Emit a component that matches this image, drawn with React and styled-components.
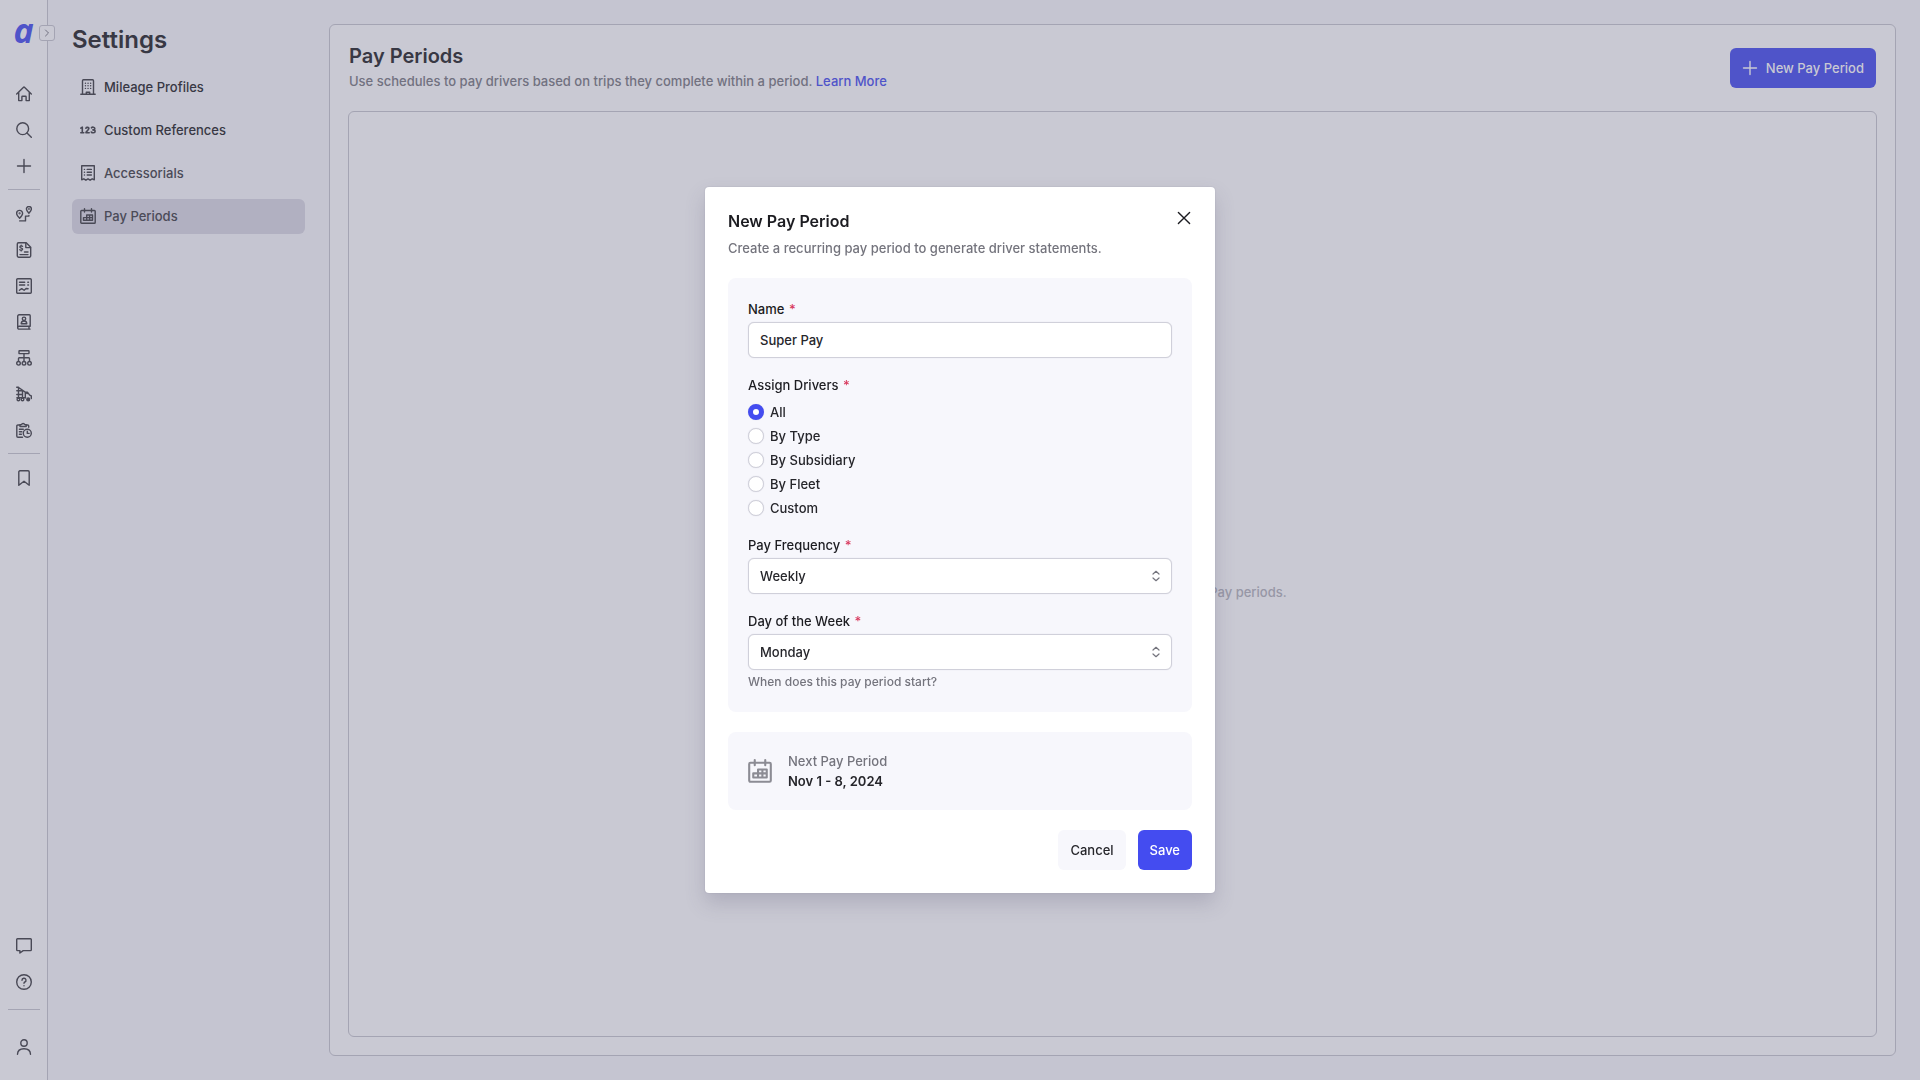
import React, { useState } from 'react';
import styled, { createGlobalStyle, css } from 'styled-components';

const colors = {
  rail: '#c9c9d3',
  page: '#c5c5d1',
  line: '#a4a4b3',
  active: '#b1b0c1',
  ink: '#383844',
  inkSoft: '#4b4b58',
  icon: '#494956',
  muted: '#717180',
  faint: '#9797a6',
  brandDim: '#4f54c9',
  brand: '#444cf0',
  white: '#ffffff',
  card: '#f7f7fc',
  text: '#26262b',
  label: '#1c1c21',
  gray: '#74747d',
  border: '#d0d0da',
  required: '#d83a5e',
};

const GlobalStyle = createGlobalStyle`
  * {
    box-sizing: border-box;
  }

  body {
    margin: 0;
    background: ${colors.page};
    font-family: Inter, 'Liberation Sans', sans-serif;
    font-size: 13px;
    line-height: 20px;
    font-weight: 500;
    color: ${colors.text};
  }

  button,
  input,
  select {
    font: inherit;
    color: inherit;
  }
`;

const Layout = styled.div`
  display: flex;
  min-height: 100vh;
`;

const Rail = styled.nav`
  position: relative;
  display: flex;
  flex-direction: column;
  align-items: center;
  width: 48px;
  padding: 12px 0 15px;
  background: ${colors.rail};
  border-right: 1px solid ${colors.line};
`;

const Logo = styled.a`
  height: 64px;
  font-family: 'Open Sans', sans-serif;
  font-size: 34px;
  font-style: italic;
  font-weight: 700;
  line-height: 36px;
  color: ${colors.brandDim};
  text-decoration: none;
`;

const Expand = styled.button`
  position: absolute;
  top: 25px;
  right: -8px;
  display: flex;
  align-items: center;
  justify-content: center;
  width: 16px;
  height: 16px;
  padding: 0;
  color: ${colors.muted};
  background: ${colors.rail};
  border: 1px solid ${colors.line};
  border-radius: 3px;
`;

const RailLink = styled.a`
  display: flex;
  align-items: center;
  justify-content: center;
  width: 36px;
  height: 36px;
  color: ${colors.icon};
`;

const Divider = styled.hr`
  width: 32px;
  height: 1px;
  margin: ${(props) => props.$space || '5px 0 6px'};
  background: ${colors.line};
  border: 0;
`;

const Spacer = styled.div`
  flex: 1;
`;

const Submenu = styled.aside`
  width: 281px;
  padding: 24px;
`;

const SettingsTitle = styled.h1`
  margin: 0 0 14px;
  font-size: 24px;
  font-weight: 600;
  line-height: 32px;
  color: ${colors.ink};
`;

const Menu = styled.ul`
  display: flex;
  flex-direction: column;
  gap: 8px;
  margin: 0;
  padding: 0;
  list-style: none;
`;

const MenuLink = styled.a`
  display: flex;
  align-items: center;
  gap: 8px;
  height: 35px;
  padding: 0 8px 1px;
  border-radius: 6px;
  color: ${(props) => (props.$soft ? colors.inkSoft : colors.ink)};
  text-decoration: none;

  svg {
    color: ${colors.icon};
  }

  ${(props) =>
    props.$active &&
    css`
      background: ${colors.active};
    `}
`;

const Main = styled.main`
  flex: 1;
  display: flex;
  flex-direction: column;
  margin: 24px 24px 24px 0;
  padding: 18px;
  background: ${colors.rail};
  border: 1px solid ${colors.line};
  border-radius: 6px;
`;

const Header = styled.header`
  display: flex;
  align-items: center;
  justify-content: space-between;
  padding: 0 1px;
  margin-bottom: 18px;
`;

const PageTitle = styled.h2`
  margin: 0;
  font-size: 20px;
  font-weight: 600;
  line-height: 26px;
  color: ${colors.ink};
`;

const PageText = styled.p`
  margin: 2px 0;
  color: ${colors.muted};

  a {
    color: ${colors.brandDim};
    text-decoration: none;
  }
`;

const Button = styled.button`
  display: flex;
  align-items: center;
  gap: 8px;
  height: 40px;
  padding: 0 12px;
  border: 0;
  border-radius: 6px;
  color: ${(props) => (props.$variant === 'plain' ? colors.text : colors.white)};
  background: ${(props) => (props.$variant === 'plain' ? colors.card : colors.brand)};

  ${(props) =>
    props.$variant === 'dim' &&
    css`
      color: ${colors.rail};
      background: ${colors.brandDim};
    `}
`;

const Empty = styled.section`
  flex: 1;
  display: flex;
  align-items: center;
  justify-content: center;
  padding-top: 36px;
  border: 1px solid ${colors.line};
  border-radius: 6px;
  color: ${colors.faint};
`;

const Overlay = styled.div`
  position: fixed;
  inset: 0;
  display: flex;
  align-items: center;
  justify-content: center;
`;

const Dialog = styled.form`
  display: flex;
  flex-direction: column;
  gap: 20px;
  width: 510px;
  padding: 23px;
  background: ${colors.white};
  border-radius: 4px;
  box-shadow: 0 10px 20px rgba(80, 78, 110, 0.22), 0 0 2px rgba(80, 78, 110, 0.2);
`;

const DialogHeader = styled.div`
  display: flex;
  align-items: flex-start;
  justify-content: space-between;
`;

const DialogTitle = styled.h2`
  margin: 0 0 6px;
  font-size: 16px;
  font-weight: 600;
  line-height: 22px;
  color: ${colors.label};
`;

const DialogText = styled.p`
  margin: 0;
  color: ${colors.gray};
`;

const Close = styled.button`
  display: flex;
  padding: 0;
  color: ${colors.label};
  background: none;
  border: 0;
`;

const Card = styled.section`
  display: flex;
  flex-direction: column;
  gap: 16px;
  padding: 20px;
  background: ${colors.card};
  border-radius: 8px;
`;

const Field = styled.div`
  display: flex;
  flex-direction: column;
`;

const labelStyle = css`
  padding: 0;
  line-height: 22px;
  color: ${colors.label};

  span {
    margin-left: 1px;
    color: ${colors.required};
  }
`;

const Label = styled.label`
  ${labelStyle}
  margin-bottom: 2px;
`;

const Group = styled.fieldset`
  margin: 0;
  padding: 0;
  border: 0;
`;

const Legend = styled.legend`
  ${labelStyle}
  margin-bottom: 6px;
`;

const RadioList = styled.div`
  display: flex;
  flex-direction: column;
  gap: 4px;
`;

const controlStyle = css`
  width: 100%;
  height: 36px;
  padding: 0 11px;
  background: ${colors.white};
  border: 1px solid ${colors.border};
  border-radius: 6px;
  box-shadow: 0 0 1px ${colors.border};
  outline: none;
`;

const Input = styled.input`
  ${controlStyle}
`;

const Select = styled.select`
  ${controlStyle}
  appearance: none;
`;

const SelectWrap = styled.div`
  position: relative;
  display: flex;

  svg {
    position: absolute;
    top: 12px;
    right: 10px;
    color: ${colors.gray};
    pointer-events: none;
  }
`;

const Hint = styled.p`
  margin: 2px 0 0;
  font-size: 12px;
  color: ${colors.gray};
`;

const RadioLabel = styled.label`
  display: flex;
  align-items: center;
  gap: 6px;
  height: 20px;
`;

const Radio = styled.input`
  appearance: none;
  width: 16px;
  height: 16px;
  margin: 0;
  background: ${colors.white};
  border: 1px solid ${colors.border};
  border-radius: 50%;
  box-shadow: 0 0 1px ${colors.border};

  &:checked {
    border: 5px solid ${colors.brand};
  }
`;

const Summary = styled.section`
  display: flex;
  align-items: center;
  gap: 16px;
  padding: 19px 20px;
  background: ${colors.card};
  border-radius: 8px;
  color: ${colors.gray};

  svg {
    color: #8c8c94;
  }

  p {
    margin: 0;
  }

  strong {
    font-weight: 600;
    color: ${colors.text};
  }
`;

const Actions = styled.div`
  display: flex;
  justify-content: flex-end;
  gap: 12px;
`;

const Icon = ({ size = 16, width = 1.4, children }) => (
  <svg
    width={size}
    height={size}
    viewBox="0 0 16 16"
    fill="none"
    stroke="currentColor"
    strokeWidth={width}
    strokeLinecap="round"
    strokeLinejoin="round"
    aria-hidden="true"
  >
    {children}
  </svg>
);

const HomeIcon = () => (
  <Icon>
    <path d="M.7 8 7.3 1.4a1 1 0 0 1 1.4 0L15.3 8" />
    <path d="M2.7 6.8v7.800h3.200v-3.800a.6.6 0 0 1 .6-.6h3a.6.6 0 0 1 .6.6v3.800h3.200V6.800" />
  </Icon>
);

const SearchIcon = () => (
  <Icon>
    <circle cx="6.7" cy="6.7" r="5.900" />
    <path d="m11 11 4.300 4.300" />
  </Icon>
);

const PlusIcon = () => (
  <Icon>
    <path d="M8 1.500v13M1.500 8h13" />
  </Icon>
);

const RouteIcon = () => (
  <Icon>
    <path d="M6.6 7.4c0 1.8-3 4.8-3 4.8s-3-3-3-4.8a3 3 0 0 1 6 0Z" />
    <path d="M15.4 3c0 1.6-2.5 4.2-2.5 4.2S10.4 4.6 10.4 3a2.5 2.5 0 0 1 5 0Z" />
    <circle cx="3.6" cy="7.3" r=".4" />
    <circle cx="12.9" cy="3" r=".3" />
    <path d="M3.7 14.900h5.800v-4.800h3.400V9.500" />
  </Icon>
);

const InvoiceIcon = () => (
  <Icon>
    <path d="M1.300 13.800V2A1.200 1.200 0 0 1 2.500.8h7.700l4.500 4.500v8.500a1.400 1.400 0 0 1-1.400 1.400H2.700a1.400 1.400 0 0 1-1.400-1.400Z" />
    <path d="M9.800 1v4.600h4.700M8.500 10h3.500M4 12.600h8" />
    <path d="M6.500 4.300C5.700 3.700 3.900 3.800 3.900 5s2.700.9 2.700 2.100-1.900 1.400-2.800.7M5.200 3.200v.5M5.200 8.200v.7" />
  </Icon>
);

const ReportIcon = () => (
  <Icon>
    <rect x=".7" y=".7" width="14.6" height="14.6" rx="1" />
    <path d="M3.500 4.200h5.200M3.500 7h5.200M11.800 4.200h.7M11.800 7h.7" />
    <path d="m3.400 12.300 2.300-1.700 2.400 1.700 2-1.800 2 .2" />
  </Icon>
);

const ContactIcon = () => (
  <Icon>
    <path d="M1.700 13.600V2.200A1.400 1.400 0 0 1 3.100.8h10.200c.5 0 .9.400.9.900v10.500H3.100a1.400 1.400 0 0 0 0 2.900h11M13 12.300v2.700" />
    <circle cx="8" cy="4.800" r="1.700" />
    <path d="M5.200 9.700c.1-3.700 5.500-3.700 5.600 0Z" />
  </Icon>
);

const TreeIcon = () => (
  <Icon>
    <rect x="3" y=".8" width="10" height="2.800" rx=".4" />
    <path d="M8 3.700v7.800M2.500 11.300V8.600c0-.5.400-.8.800-.8h9.400c.5 0 .8.400.8.800v2.700" />
    <circle cx="2.500" cy="13.300" r="1.800" />
    <circle cx="8" cy="13.300" r="1.800" />
    <circle cx="13.500" cy="13.300" r="1.800" />
  </Icon>
);

const TruckIcon = () => (
  <Icon>
    <path d="M.7 1.200h1.800v11M.8 4.800h5.700v6M.8 8.500h5.700M3 1.800l8.300 5.800M9.300 6.300V12M9.300 6.300h2.300l2.100 2.800 1.600.8v2.700M.9 11.800h8.700" />
    <circle cx="2.400" cy="13.400" r="1.300" />
    <circle cx="6.500" cy="13.400" r="1.300" />
    <circle cx="12.200" cy="13.400" r="1.400" fill="currentColor" />
  </Icon>
);

const ClipboardClockIcon = () => (
  <Icon>
    <path d="M6.500 15.200H2A1.200 1.200 0 0 1 .8 14V4c0-.6.500-1 1-1h2.100M10.200 3h1.500c.6 0 1 .5 1 1v1.300" />
    <path d="M4 4.500V2.600h1.500a1.700 1.700 0 0 1 3.200 0h1.500v1.900ZM3.400 7.300h3.900M3.400 9.800h2.400M3.400 12.300h2" />
    <circle cx="11.300" cy="11.300" r="4" />
    <path d="M11.300 9.200v2.200h1.800" />
  </Icon>
);

const BookmarkIcon = () => (
  <Icon>
    <path d="M2.800 15.200V1.900c0-.6.500-1.100 1.100-1.100h8.200c.6 0 1.100.5 1.100 1.100v13.300L8 11.200Z" />
  </Icon>
);

const ChatIcon = () => (
  <Icon>
    <path d="M15.300 1.600v10.200a.8.8 0 0 1-.8.800H7.200L3.900 15v-2.400H1.500a.8.8 0 0 1-.8-.8V1.600c0-.4.400-.8.800-.8h13c.4 0 .8.400.8.800Z" />
  </Icon>
);

const HelpIcon = () => (
  <Icon>
    <circle cx="8" cy="8" r="7.300" />
    <path d="M6 6.200a2 2 0 1 1 2.900 1.800c-.6.300-.9.700-.9 1.300M8 11.700v.1" />
  </Icon>
);

const PersonIcon = () => (
  <Icon>
    <circle cx="8" cy="4" r="3.200" />
    <path d="M1.500 15.300c.1-3.500 2.700-5.500 6.500-5.500s6.400 2 6.500 5.500" />
  </Icon>
);

const BuildingIcon = () => (
  <Icon>
    <path d="M.8 15.200h14.400M2.500 15V1.700c0-.5.400-.9.900-.9h9.200c.5 0 .9.400.9.900V15M6.300 15v-1.800h3.400V15" />
    <path d="M5.400 4.200h.1M8 4.200h.1M10.600 4.200h.1M5.400 6.800h.1M8 6.800h.1M10.600 6.800h.1M5.400 9.400h.1M8 9.400h.1M10.600 9.400h.1" />
  </Icon>
);

const NumbersIcon = () => (
  <Icon width={1.6}>
    <path d="M.8 6.100 2.300 5.200v5.500M.8 10.800h3" />
    <path d="M5.900 6.200c.5-1.300 3-1.100 3 .4 0 1.300-3 2.700-3 4.200h3.300" />
    <path d="M11.500 5.800c.7-1 3.300-.8 3.300.7 0 1-.8 1.400-1.900 1.400 1.200 0 2.200.4 2.200 1.500 0 1.700-3 1.800-3.800.6" />
  </Icon>
);

const ReceiptIcon = () => (
  <Icon>
    <path d="M1.700.8h12.600v14l-2.100-1-2.100 1.400L8 13.800l-2.100 1.400-2.100-1.400-2.100 1Z" />
    <path d="M4.400 4.400h.1M7.200 4.400h4.200M4.400 7.200h.1M7.200 7.200h4.200M4.400 10h.1M7.200 10h4.200" />
  </Icon>
);

const CalendarIcon = ({ size }) => (
  <Icon size={size}>
    <rect x=".8" y="2.500" width="14.400" height="12.700" rx=".8" />
    <path d="M4.500.7v3.400M11.500.7v3.400" />
    <path d="M3.500 12.300V9.600h3.200V7h5.800v5.300ZM6.700 9.600h5.800M6.700 9.600v2.700M9.600 7v5.300" />
  </Icon>
);

const railTop = [
  ['Home', HomeIcon],
  ['Search', SearchIcon],
  ['Create', PlusIcon],
];

const railMiddle = [
  ['Trips', RouteIcon],
  ['Invoices', InvoiceIcon],
  ['Reports', ReportIcon],
  ['Contacts', ContactIcon],
  ['Organization', TreeIcon],
  ['Equipment', TruckIcon],
  ['Schedules', ClipboardClockIcon],
];

const menuItems = [
  { title: 'Mileage Profiles', icon: BuildingIcon },
  { title: 'Custom References', icon: NumbersIcon },
  { title: 'Accessorials', icon: ReceiptIcon, soft: true },
  { title: 'Pay Periods', icon: CalendarIcon, soft: true, active: true },
];

const driverOptions = ['All', 'By Type', 'By Subsidiary', 'By Fleet', 'Custom'];

const RailItem = ({ title, icon: Glyph }) => (
  <RailLink href="#" aria-label={title}>
    <Glyph />
  </RailLink>
);

const SelectField = ({ id, label, options, hint }) => (
  <Field>
    <Label htmlFor={id}>
      {label} <span>*</span>
    </Label>
    <SelectWrap>
      <Select id={id}>
        {options.map((option) => (
          <option key={option}>{option}</option>
        ))}
      </Select>
      <svg width="12" height="12" viewBox="0 0 12 12" fill="none" stroke="currentColor" strokeWidth="1.2" strokeLinecap="round" strokeLinejoin="round">
        <path d="m3 4 3-2.700L9 4M3 8l3 2.700L9 8" />
      </svg>
    </SelectWrap>
    {hint && <Hint>{hint}</Hint>}
  </Field>
);

const App = () => {
  const [name, setName] = useState('Super Pay');
  const [drivers, setDrivers] = useState('All');

  return (
    <>
      <GlobalStyle />
      <Layout>
        <Rail>
          <Logo href="#">a</Logo>
          <Expand aria-label="Expand">
            <svg width="8" height="8" viewBox="0 0 8 8" fill="none" stroke="currentColor" strokeLinecap="round" strokeLinejoin="round">
              <path d="m2.500 1 3 3-3 3" />
            </svg>
          </Expand>
          {railTop.map(([title, icon]) => (
            <RailItem key={title} title={title} icon={icon} />
          ))}
          <Divider />
          {railMiddle.map(([title, icon]) => (
            <RailItem key={title} title={title} icon={icon} />
          ))}
          <Divider />
          <RailItem title="Bookmarks" icon={BookmarkIcon} />
          <Spacer />
          <RailItem title="Messages" icon={ChatIcon} />
          <RailItem title="Help" icon={HelpIcon} />
          <Divider $space="9px 0 19px" />
          <RailItem title="Account" icon={PersonIcon} />
        </Rail>

        <Submenu>
          <SettingsTitle>Settings</SettingsTitle>
          <Menu>
            {menuItems.map(({ title, icon: Glyph, soft, active }) => (
              <li key={title}>
                <MenuLink href="#" $soft={soft} $active={active}>
                  <Glyph />
                  {title}
                </MenuLink>
              </li>
            ))}
          </Menu>
        </Submenu>

        <Main>
          <Header>
            <div>
              <PageTitle>Pay Periods</PageTitle>
              <PageText>
                Use schedules to pay drivers based on trips they complete within a period. <a href="#">Learn More</a>
              </PageText>
            </div>
            <Button $variant="dim">
              <PlusIcon />
              New Pay Period
            </Button>
          </Header>
          <Empty>Your account does not have any scheduled Pay periods.</Empty>
        </Main>
      </Layout>

      <Overlay>
        <Dialog role="dialog" aria-labelledby="dialog-title" onSubmit={(e) => e.preventDefault()}>
          <DialogHeader>
            <div>
              <DialogTitle id="dialog-title">New Pay Period</DialogTitle>
              <DialogText>Create a recurring pay period to generate driver statements.</DialogText>
            </div>
            <Close type="button" aria-label="Close">
              <Icon>
                <path d="m2.400 2.400 11.200 11.200M13.600 2.400 2.400 13.600" />
              </Icon>
            </Close>
          </DialogHeader>

          <Card>
            <Field>
              <Label htmlFor="name">
                Name <span>*</span>
              </Label>
              <Input id="name" value={name} onChange={(e) => setName(e.target.value)} />
            </Field>
            <Group>
              <Legend>
                Assign Drivers <span>*</span>
              </Legend>
              <RadioList>
                {driverOptions.map((option) => (
                  <RadioLabel key={option}>
                    <Radio type="radio" name="drivers" checked={drivers === option} onChange={() => setDrivers(option)} />
                    {option}
                  </RadioLabel>
                ))}
              </RadioList>
            </Group>
            <SelectField id="frequency" label="Pay Frequency" options={['Weekly']} />
            <SelectField id="day" label="Day of the Week" options={['Monday']} hint="When does this pay period start?" />
          </Card>

          <Summary>
            <CalendarIcon size={24} />
            <div>
              <p>Next Pay Period</p>
              <strong>Nov 1 - 8, 2024</strong>
            </div>
          </Summary>

          <Actions>
            <Button type="button" $variant="plain">
              Cancel
            </Button>
            <Button type="submit">Save</Button>
          </Actions>
        </Dialog>
      </Overlay>
    </>
  );
};

export default App;
